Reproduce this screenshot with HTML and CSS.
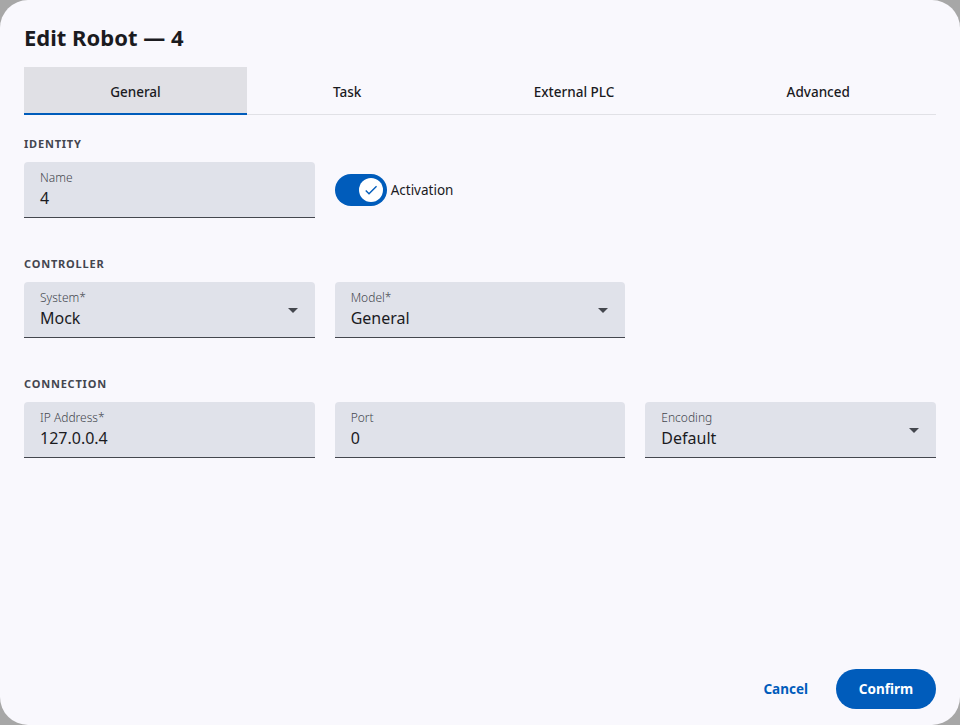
FILE: index.html
```html
<!DOCTYPE html>
<html lang="en">
<head>
    <meta charset="UTF-8">
    <meta name="viewport" content="width=device-width, initial-scale=1.0">
    <title>Edit Robot</title>
    <link rel="stylesheet" href="styles.css">
</head>
<body>
<div class="dialog">
    <h1 class="title">Edit Robot — 4</h1>
    <div class="tabs">
        <div class="tab active">General</div>
        <div class="tab">Task</div>
        <div class="tab">External PLC</div>
        <div class="tab">Advanced</div>
    </div>

    <div class="content">
        <div class="section">
            <div class="section-label">IDENTITY</div>
            <div class="row">
                <div class="field">
                    <span class="field-label">Name</span>
                    <span class="field-value">4</span>
                </div>
                <div class="toggle-wrap">
                    <div class="toggle">
                        <div class="thumb">
                            <svg width="16" height="16" viewBox="0 0 24 24"><path d="M9 16.2 4.8 12l-1.4 1.4L9 19 21 7l-1.4-1.4z" fill="#005cbb"/></svg>
                        </div>
                    </div>
                    <span class="toggle-label">Activation</span>
                </div>
            </div>
        </div>

        <div class="section">
            <div class="section-label">CONTROLLER</div>
            <div class="row">
                <div class="field select">
                    <span class="field-label">System*</span>
                    <span class="field-value">Mock</span>
                    <span class="arrow"></span>
                </div>
                <div class="field select">
                    <span class="field-label">Model*</span>
                    <span class="field-value">General</span>
                    <span class="arrow"></span>
                </div>
            </div>
        </div>

        <div class="section">
            <div class="section-label">CONNECTION</div>
            <div class="row">
                <div class="field">
                    <span class="field-label">IP Address*</span>
                    <span class="field-value">127.0.0.4</span>
                </div>
                <div class="field">
                    <span class="field-label">Port</span>
                    <span class="field-value">0</span>
                </div>
                <div class="field select">
                    <span class="field-label">Encoding</span>
                    <span class="field-value">Default</span>
                    <span class="arrow"></span>
                </div>
            </div>
        </div>
    </div>

    <div class="actions">
        <button class="btn-text">Cancel</button>
        <button class="btn-filled">Confirm</button>
    </div>
</div>
</body>
</html>
```

FILE: styles.css
```css
*{
    box-sizing: border-box;
}
body{
    margin: 0;
    background: #a7a7a7;
    font-family: "Noto Sans", Inter, sans-serif;
    color: #1b1b1f;
}
.dialog{
    width: 960px;
    height: 725px;
    background: #f9f8fd;
    border-radius: 28px;
    padding: 0 24px 16px;
    display: flex;
    flex-direction: column;
}
.title{
    margin: 0;
    padding-top: 21px;
    height: 67px;
    font-size: 22px;
    line-height: 32px;
    font-weight: 700;
}
.tabs{
    display: flex;
    border-bottom: 1px solid #e1e1e6;
}
.tab{
    flex: 1 1 auto;
    height: 48px;
    display: flex;
    align-items: center;
    justify-content: center;
    padding-top: 3px;
    font-size: 13.5px;
    font-weight: 500;
    border-bottom: 2px solid transparent;
    margin-bottom: -1px;
}
.tab.active{
    background: #e0e0e5;
    border-bottom-color: #005cbb;
}
.content{
    flex: 1;
    padding-top: 22px;
}
.section{
    margin-bottom: 39px;
}
.section-label{
    font-size: 11px;
    font-weight: 700;
    letter-spacing: 0.8px;
    color: #44464f;
    line-height: 14px;
    margin-bottom: 11px;
}
.row{
    display: grid;
    grid-template-columns: repeat(3, 1fr);
    gap: 20px;
}
.field{
    position: relative;
    height: 56px;
    background: #e0e2ea;
    border-radius: 4px 4px 0 0;
    border-bottom: 1px solid #44474e;
    padding: 8px 16px 0;
    display: flex;
    flex-direction: column;
}
.field-label{
    font-size: 12px;
    line-height: 16px;
    color: #44474e;
    font-weight: 300;
}
.field-value{
    font-size: 16px;
    line-height: 24px;
    color: #1b1b1f;
}
.arrow{
    position: absolute;
    right: 17px;
    top: 26px;
    width: 0;
    height: 0;
    border-left: 5px solid transparent;
    border-right: 5px solid transparent;
    border-top: 5px solid #44474e;
}
.toggle-wrap{
    display: flex;
    align-items: center;
    height: 56px;
}
.toggle{
    width: 52px;
    height: 32px;
    border-radius: 16px;
    background: #005cbb;
    display: flex;
    align-items: center;
    justify-content: flex-end;
    padding-right: 4px;
}
.thumb{
    width: 24px;
    height: 24px;
    border-radius: 50%;
    background: #fff;
    display: flex;
    align-items: center;
    justify-content: center;
}
.toggle-label{
    margin-left: 4px;
    font-size: 13.5px;
    color: #1b1b1f;
}
.actions{
    display: flex;
    justify-content: flex-end;
    align-items: center;
    gap: 16px;
}
button{
    font-family: inherit;
    font-size: 13.5px;
    font-weight: 700;
    border: none;
    height: 40px;
    border-radius: 20px;
    cursor: pointer;
}
.btn-text{
    background: none;
    color: #005cbb;
    padding: 0 12px;
}
.btn-filled{
    background: #005cbb;
    color: #fff;
    width: 100px;
}
```
